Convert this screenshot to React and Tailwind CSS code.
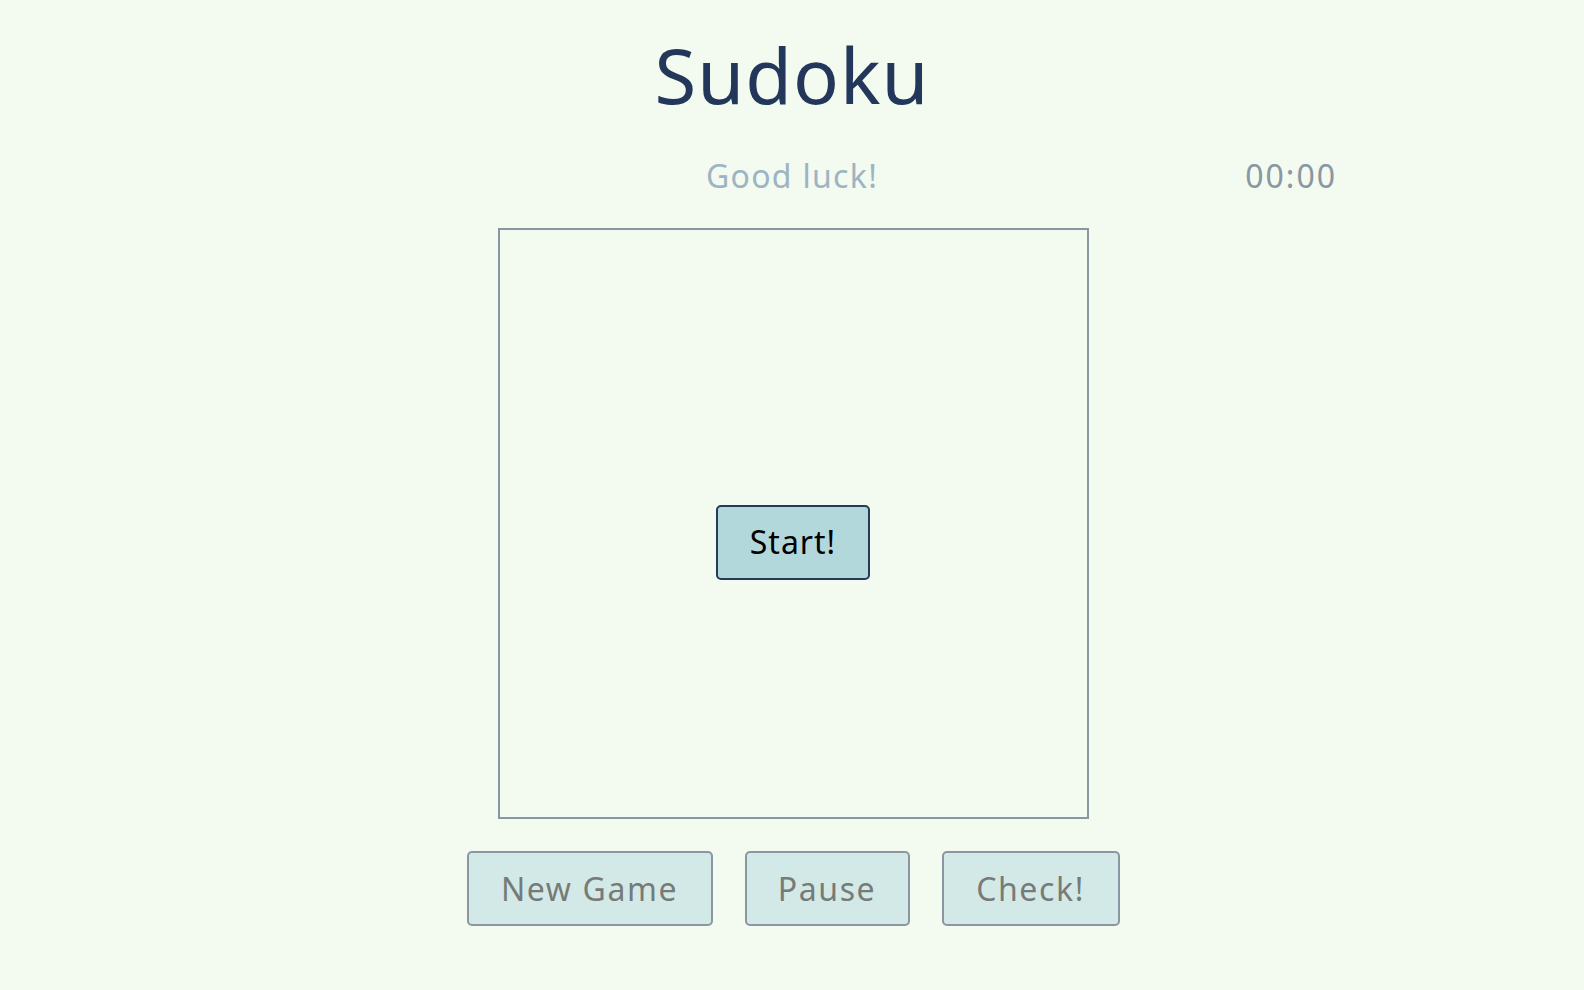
import React from "react";

// Control buttons under the board
const controls = [
  { key: "new", label: "New Game", width: "w-[246px]" },
  { key: "pause", label: "Pause", width: "w-[165px]" },
  { key: "check", label: "Check!", width: "w-[178px]" },
];

export default function App() {
  return (
    <div className="min-h-screen w-full bg-[#f3faf0] font-['Noto_Sans',sans-serif] flex flex-col items-center">
      <h1 className="mt-[30px] h-[90px] leading-[90px] text-[76px] text-[#22375a] tracking-[1px]">
        Sudoku
      </h1>

      {/* status row: message centred, timer at right */}
      <div className="mt-[36px] w-[1090px] grid grid-cols-3 items-center h-[40px] text-[32px] leading-[40px]">
        <div />
        <div className="text-center text-[#9db4c2] tracking-[1.3px]">Good luck!</div>
        <div className="text-right text-[#8a97a3] tracking-[2px]">00:00</div>
      </div>

      {/* board, waiting for start */}
      <div className="mt-[32px] ml-[2px] w-[591px] h-[591px] pt-[37px] border-2 border-[#8a97a3] flex items-center justify-center">
        <button
          type="button"
          className="w-[154px] h-[75px] rounded-[5px] border-2 border-[#253a56] bg-[#b2d8dc] text-black text-[32px] tracking-[1px]"
        >
          Start!
        </button>
      </div>

      <div className="mt-[32px] ml-[2px] flex gap-[32px]">
        {controls.map((c) => (
          <button
            key={c.key}
            type="button"
            className={
              "h-[75px] rounded-[5px] border-2 border-[#8a97a3] bg-[#d3e9e7] text-[#777b77] text-[32px] tracking-[1.6px] " +
              c.width
            }
          >
            {c.label}
          </button>
        ))}
      </div>
    </div>
  );
}
